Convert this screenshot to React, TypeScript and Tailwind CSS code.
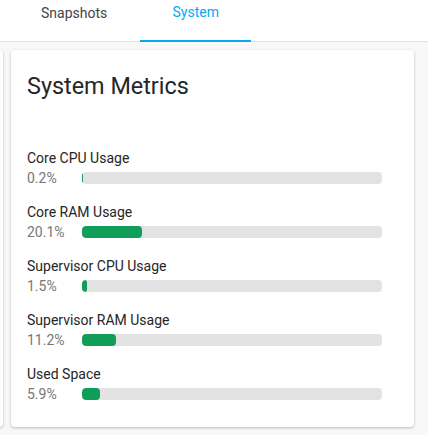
import React from "react";

type Metric = { label: string; value: number };

const metrics: Metric[] = [
  { label: "Core CPU Usage", value: 0.2 },
  { label: "Core RAM Usage", value: 20.1 },
  { label: "Supervisor CPU Usage", value: 1.5 },
  { label: "Supervisor RAM Usage", value: 11.2 },
  { label: "Used Space", value: 5.9 },
];

function MetricRow({ label, value }: Metric) {
  return (
    <div className="flex flex-col">
      <div className="text-[14px] leading-[20px] text-[#262626]">{label}</div>
      <div className="flex items-center h-[20px]">
        <div className="w-[55px] text-[14px] leading-[20px] text-[#777]">{value}%</div>
        <div className="w-[300px] h-[12px] rounded-[4px] bg-[#e3e3e3] overflow-hidden">
          <div
            className="h-full rounded-[4px] bg-[#0f9d58]"
            style={{ width: `${value}%` }}
          />
        </div>
      </div>
    </div>
  );
}

export default function App() {
  return (
    <div
      className="w-[428px] h-[435px] bg-[#f8f8f8] overflow-hidden"
      style={{ fontFamily: "Roboto, 'Liberation Sans', sans-serif" }}
    >
      {/* tab bar */}
      <div className="h-[42px] bg-white border-b border-[#e0e0e0] flex pl-[8px]">
        <div className="px-[33px] pt-[3px] text-[14px] leading-[20px] text-[#444]">Snapshots</div>
        <div className="relative w-[111px] pt-[2px] text-center text-[14px] leading-[20px] text-[#03a9f4]">
          System
          <div className="absolute left-0 right-0 -bottom-[1px] h-[2px] bg-[#03a9f4]" />
        </div>
      </div>

      {/* cards */}
      <div className="flex gap-[8px] pt-[8px] -ml-[8px]">
        <div className="w-[11px] h-[377px] bg-white rounded-[4px] shadow-[0_1px_3px_rgba(0,0,0,0.25)]" />
        <div className="w-[403px] h-[377px] bg-white rounded-[4px] shadow-[0_1px_3px_rgba(0,0,0,0.25)] px-[16px] pt-[20px]">
          <h1 className="text-[23.4px] leading-[32px] text-[#262626] font-normal">System Metrics</h1>
          <div className="mt-[46px] flex flex-col gap-[14px]">
            {metrics.map((m) => (
              <MetricRow key={m.label} {...m} />
            ))}
          </div>
        </div>
      </div>
    </div>
  );
}
